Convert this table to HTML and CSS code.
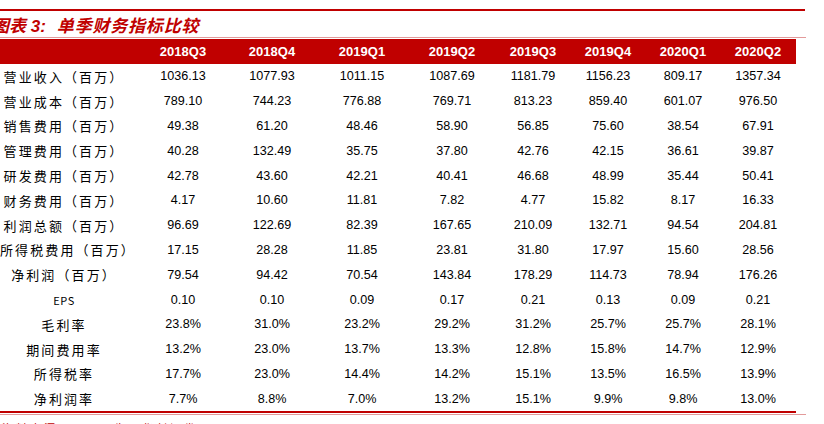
FILE: index.html
```html
<!DOCTYPE html>
<html lang="zh-CN">
<head>
<meta charset="utf-8">
<title>单季财务指标比较</title>
<link rel="stylesheet" href="styles.css">
</head>
<body>
<div class="sheet">
  <div class="rule-top"></div>
  <div class="title"><span class="cap">图表 3:</span><span class="name">单季财务指标比较</span></div>
  <div class="rule-thin"></div>
  <div class="table">
    <div class="row head">
      <div class="lbl"></div>
      <div>2018Q3</div><div>2018Q4</div><div>2019Q1</div><div>2019Q2</div><div>2019Q3</div><div>2019Q4</div><div>2020Q1</div><div>2020Q2</div>
    </div>
    <div class="row"><div class="lbl">营业收入（百万）</div><div>1036.13</div><div>1077.93</div><div>1011.15</div><div>1087.69</div><div>1181.79</div><div>1156.23</div><div>809.17</div><div>1357.34</div></div>
    <div class="row"><div class="lbl">营业成本（百万）</div><div>789.10</div><div>744.23</div><div>776.88</div><div>769.71</div><div>813.23</div><div>859.40</div><div>601.07</div><div>976.50</div></div>
    <div class="row"><div class="lbl">销售费用（百万）</div><div>49.38</div><div>61.20</div><div>48.46</div><div>58.90</div><div>56.85</div><div>75.60</div><div>38.54</div><div>67.91</div></div>
    <div class="row"><div class="lbl">管理费用（百万）</div><div>40.28</div><div>132.49</div><div>35.75</div><div>37.80</div><div>42.76</div><div>42.15</div><div>36.61</div><div>39.87</div></div>
    <div class="row"><div class="lbl">研发费用（百万）</div><div>42.78</div><div>43.60</div><div>42.21</div><div>40.41</div><div>46.68</div><div>48.99</div><div>35.44</div><div>50.41</div></div>
    <div class="row"><div class="lbl">财务费用（百万）</div><div>4.17</div><div>10.60</div><div>11.81</div><div>7.82</div><div>4.77</div><div>15.82</div><div>8.17</div><div>16.33</div></div>
    <div class="row"><div class="lbl">利润总额（百万）</div><div>96.69</div><div>122.69</div><div>82.39</div><div>167.65</div><div>210.09</div><div>132.71</div><div>94.54</div><div>204.81</div></div>
    <div class="row"><div class="lbl">所得税费用（百万）</div><div>17.15</div><div>28.28</div><div>11.85</div><div>23.81</div><div>31.80</div><div>17.97</div><div>15.60</div><div>28.56</div></div>
    <div class="row"><div class="lbl">净利润（百万）</div><div>79.54</div><div>94.42</div><div>70.54</div><div>143.84</div><div>178.29</div><div>114.73</div><div>78.94</div><div>176.26</div></div>
    <div class="row"><div class="lbl eps">EPS</div><div>0.10</div><div>0.10</div><div>0.09</div><div>0.17</div><div>0.21</div><div>0.13</div><div>0.09</div><div>0.21</div></div>
    <div class="row"><div class="lbl">毛利率</div><div>23.8%</div><div>31.0%</div><div>23.2%</div><div>29.2%</div><div>31.2%</div><div>25.7%</div><div>25.7%</div><div>28.1%</div></div>
    <div class="row"><div class="lbl">期间费用率</div><div>13.2%</div><div>23.0%</div><div>13.7%</div><div>13.3%</div><div>12.8%</div><div>15.8%</div><div>14.7%</div><div>12.9%</div></div>
    <div class="row"><div class="lbl">所得税率</div><div>17.7%</div><div>23.0%</div><div>14.4%</div><div>14.2%</div><div>15.1%</div><div>13.5%</div><div>16.5%</div><div>13.9%</div></div>
    <div class="row"><div class="lbl">净利润率</div><div>7.7%</div><div>8.8%</div><div>7.0%</div><div>13.2%</div><div>15.1%</div><div>9.9%</div><div>9.8%</div><div>13.0%</div></div>
  </div>
  <div class="rule-bottom"></div>
  <div class="rule-thin"></div>
  <div class="source">资料来源：公司公告，华创证券</div>
</div>
</body>
</html>
```

FILE: styles.css
```css
html, body {
  margin: 0;
  padding: 0;
  background: #ffffff;
}
body {
  width: 824px;
  height: 424px;
  overflow: hidden;
  font-family: "Liberation Sans", Arial, "Noto Sans CJK SC", sans-serif;
  color: #000000;
}
.sheet {
  padding-top: 9px;
  display: flex;
  flex-direction: column;
}
.rule-top {
  width: 805px;
  height: 2px;
  background: #c00000;
}
.title {
  height: 26px;
  line-height: 27px;
  margin-left: -8px;
  color: #c00000;
  font-family: "Noto Sans CJK SC", sans-serif;
  font-size: 17px;
  font-weight: 700;
  font-style: italic;
  white-space: nowrap;
}
.title .cap {
  font-family: "Liberation Sans", "Noto Sans CJK SC", sans-serif;
  padding-right: 11px;
}
.title .name {
  letter-spacing: 0.8px;
}
.rule-thin {
  width: 806px;
  height: 1px;
  background: #e39a9a;
}
.table {
  margin-top: 1px;
  width: 796px;
  display: flex;
  flex-direction: column;
}
.row {
  display: grid;
  grid-template-columns: 138px 90px 88px 92px 88px 74px 76px 74px 76px;
  height: 24.8px;
  align-items: center;
  text-align: center;
  font-size: 12.6px;
  white-space: nowrap;
}
.row.head {
  height: 25px;
  background: #c00000;
  color: #ffffff;
  font-weight: 700;
  font-size: 13px;
}
.lbl {
  padding-right: 10px;
  font-family: "Noto Sans CJK SC", sans-serif;
  font-size: 13px;
  letter-spacing: 2.1px;
}
.lbl.eps {
  font-size: 11px;
  letter-spacing: 0.6px;
}
.rule-bottom {
  width: 796px;
  height: 2px;
  background: #c00000;
  margin-bottom: 1px;
}
.source {
  margin-top: 6px;
  margin-left: 2px;
  color: #c00000;
  font-family: "Noto Sans CJK SC", sans-serif;
  font-size: 11px;
  letter-spacing: 3px;
  line-height: 14px;
  white-space: nowrap;
}
```
